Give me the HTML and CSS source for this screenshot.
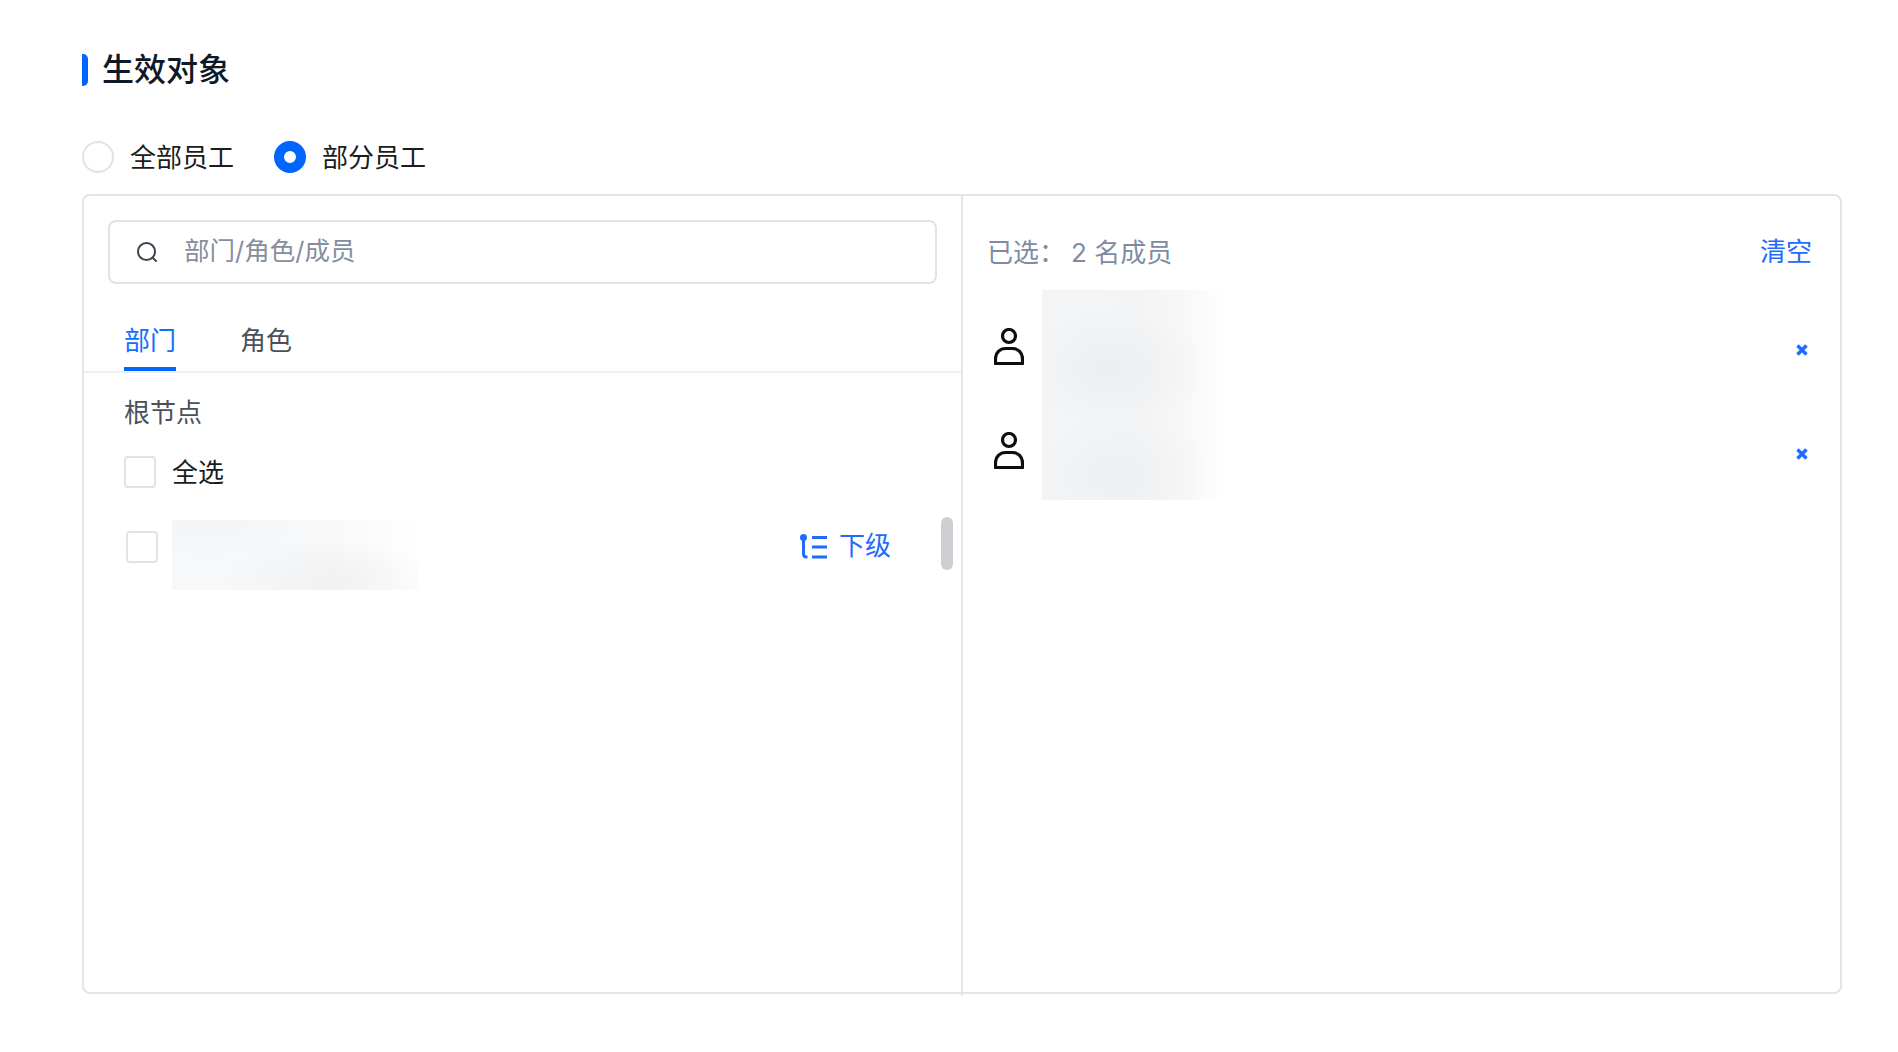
FILE: index.html
```html
<!DOCTYPE html>
<html lang="zh-CN">
<head>
  <meta charset="UTF-8">
  <meta name="viewport" content="width=device-width, initial-scale=1.0">
  <title>生效对象</title>
  <link rel="stylesheet" href="styles.css">
</head>
<body>
  <div class="g-container">
    <h4 class="title">生效对象</h4>

    <div class="radio-group">
      <label class="radio"><span class="radio-dot"></span>全部员工</label>
      <label class="radio radio-on"><span class="radio-dot"></span>部分员工</label>
    </div>

    <div class="panel">
      <div class="pane-left">
        <div class="search">
          <svg class="search-icon" viewBox="0 0 22 22" fill="none" stroke="#3d434d" stroke-width="2">
            <circle cx="10.5" cy="10.5" r="8.5"/>
            <path d="M17 17l3 3" stroke-linecap="round"/>
          </svg>
          <span class="search-text">部门/角色/成员</span>
        </div>

        <div class="tabs">
          <span class="tab tab-on">部门</span>
          <span class="tab">角色</span>
        </div>

        <div class="tree">
          <p class="tree-root">根节点</p>
          <label class="check-all"><span class="checkbox"></span>全选</label>
          <div class="tree-row">
            <span class="checkbox"></span>
            <div class="blur-dept"></div>
            <span class="sub-link">
              <svg viewBox="0 0 27 25" fill="none" stroke="#1f6bff" stroke-width="3">
                <circle cx="3.500" cy="3.500" r="3.500" fill="#1f6bff" stroke="none"/>
                <path d="M3.500 5v15q0 3 3 3h1"/>
                <path d="M12 3.500h15M12 13h15M12 23h15"/>
              </svg>
              下级
            </span>
          </div>
          <div class="scrollbar"></div>
        </div>
      </div>

      <div class="pane-right">
        <div class="selected-head">
          <span class="selected-count">已选：<span class="selected-num">2 名成员</span></span>
          <span class="clear">清空</span>
        </div>
        <div class="members">
          <svg class="person" viewBox="0 0 30 37" fill="none" stroke="#0b0d10" stroke-width="3.200">
            <circle cx="15" cy="8" r="6.500"/>
            <path d="M1.500 35.500v-5a10 10 0 0 1 10-10h7a10 10 0 0 1 10 10v5z" stroke-linejoin="round"/>
          </svg>
          <div class="blur-names"></div>
          <svg class="remove" viewBox="0 0 12 12" stroke="#1f6bff" stroke-width="3.500">
            <path d="M1.500 1.500l9 9M10.500 1.500l-9 9"/>
          </svg>
          <svg class="person" viewBox="0 0 30 37" fill="none" stroke="#0b0d10" stroke-width="3.200">
            <circle cx="15" cy="8" r="6.500"/>
            <path d="M1.500 35.500v-5a10 10 0 0 1 10-10h7a10 10 0 0 1 10 10v5z" stroke-linejoin="round"/>
          </svg>
          <svg class="remove" viewBox="0 0 12 12" stroke="#1f6bff" stroke-width="3.500">
            <path d="M1.500 1.500l9 9M10.500 1.500l-9 9"/>
          </svg>
        </div>
      </div>
    </div>
  </div>
</body>
</html>
```

FILE: styles.css
```css
html, body {
  margin: 0;
  height: 100%;
  background: #fff;
}
body {
  font-family: "Inter", "Noto Sans CJK SC", sans-serif;
  font-size: 26px;
  line-height: 36px;
  color: #1a1c20;
  overflow: hidden;
}
.g-container {
  padding: 54px 56px 0 82px;
}

/* 标题 */
.title {
  margin: 0;
  display: flex;
  align-items: center;
  height: 32px;
  font-size: 32px;
  font-weight: 500;
  color: #0f1826;
}
.title::before {
  content: "";
  width: 6px;
  height: 32px;
  margin-right: 14px;
  background: #0066ff;
  border-radius: 0 5px 5px 0;
}

/* 单选 */
.radio-group {
  display: flex;
  gap: 40px;
  margin-top: 55px;
  height: 32px;
}
.radio {
  display: flex;
  align-items: flex-start;
  gap: 16px;
  line-height: 34px;
}
.radio-dot {
  box-sizing: border-box;
  width: 32px;
  height: 32px;
  border: 2px solid #dfe3e8;
  border-radius: 50%;
}
.radio-on .radio-dot {
  border: 10px solid #0066ff;
}

/* 主体 */
.panel {
  display: flex;
  box-sizing: border-box;
  height: 800px;
  margin-top: 21px;
  border: 2px solid #e4e5e8;
  border-radius: 8px;
}
.pane-left {
  width: 877px;
  padding-top: 24px;
}
.pane-right {
  position: relative;
  flex: 1;
  padding: 38px 32px 0 24px;
  border-left: 2px solid #e4e5e8;
}
.pane-right::after {
  content: "";
  position: absolute;
  left: -2px;
  bottom: -4px;
  width: 2px;
  height: 4px;
  background: #e4e5e8;
}

/* 搜索 */
.search {
  display: flex;
  align-items: center;
  box-sizing: border-box;
  height: 64px;
  margin: 0 24px;
  padding-left: 26px;
  border: 2px solid #dfe3e8;
  border-radius: 8px;
  font-size: 25.500px;
  color: #868e9e;
}
.search-icon {
  width: 22px;
  height: 22px;
  margin-right: 26px;
}
.search-text {
  margin-bottom: 2px;
}

/* tab */
.tabs {
  display: flex;
  gap: 64px;
  margin-top: 39px;
  padding-left: 40px;
  border-bottom: 2px solid #eeeff4;
}
.tab {
  padding-bottom: 12px;
  color: #4b5059;
}
.tab-on {
  color: #0f6fff;
  box-shadow: inset 0 -4px 0 #0066ff;
}

/* 树 */
.tree {
  position: relative;
  padding: 22px 70px 0 40px;
}
.tree-root {
  margin: 0;
  color: #4b5059;
}
.check-all {
  display: flex;
  align-items: flex-start;
  gap: 16px;
  height: 32px;
  margin-top: 25px;
  line-height: 34px;
}
.checkbox {
  box-sizing: border-box;
  flex: none;
  width: 32px;
  height: 32px;
  border: 2px solid #dfe3e8;
  border-radius: 4px;
}
.tree-row {
  display: flex;
  align-items: flex-start;
  height: 70px;
  margin-top: 32px;
  padding-left: 2px;
}
.tree-row .checkbox {
  margin-top: 11px;
  margin-right: 14px;
}
.sub-link {
  display: flex;
  align-items: center;
  gap: 12px;
  margin-top: 8px;
  margin-left: auto;
  color: #1f6bff;
}
.sub-link svg {
  width: 27px;
  height: 25px;
}
.scrollbar {
  position: absolute;
  top: 144px;
  right: 8px;
  width: 12px;
  height: 53px;
  background: #cdced2;
  border-radius: 6px;
}

/* 模糊块 */
.blur-dept {
  width: 246px;
  height: 70px;
  background:
    radial-gradient(ellipse 110px 40px at 65% 85%, #f0f1f2, rgba(240, 241, 242, 0) 100%),
    radial-gradient(ellipse 90px 40px at 15% 0%, #f3f4f5, rgba(243, 244, 245, 0) 100%),
    linear-gradient(90deg, #f6f8fa 0%, #f8f8f9 62%, #fff 100%);
}
.blur-names {
  grid-row: 1 / 3;
  grid-column: 2;
  width: 180px;
  height: 210px;
  background:
    radial-gradient(ellipse 90px 60px at 38% 37%, #edeeef, rgba(237, 238, 239, 0) 100%),
    radial-gradient(ellipse 90px 60px at 42% 88%, #eeeff0, rgba(238, 239, 240, 0) 100%),
    linear-gradient(90deg, #f4f5f7 0%, #f3f4f5 55%, #f8f8f9 82%, #fff 100%);
}

/* 已选 */
.selected-head {
  display: flex;
  justify-content: space-between;
  margin-right: -4px;
  margin-bottom: 19px;
}
.selected-count {
  padding-top: 1px;
  color: #7f8ba3;
}
.selected-num {
  margin-left: 6px;
}
.clear {
  color: #1f6bff;
}
.members {
  display: grid;
  grid-template-columns: 30px 180px 1fr;
  grid-template-rows: 104px 104px;
  column-gap: 18px;
  padding-left: 7px;
}
.person {
  grid-column: 1;
  width: 30px;
  height: 37px;
  margin-top: 38px;
}
.remove {
  grid-column: 3;
  justify-self: end;
  width: 12px;
  height: 12px;
  margin-top: 54px;
}
```
